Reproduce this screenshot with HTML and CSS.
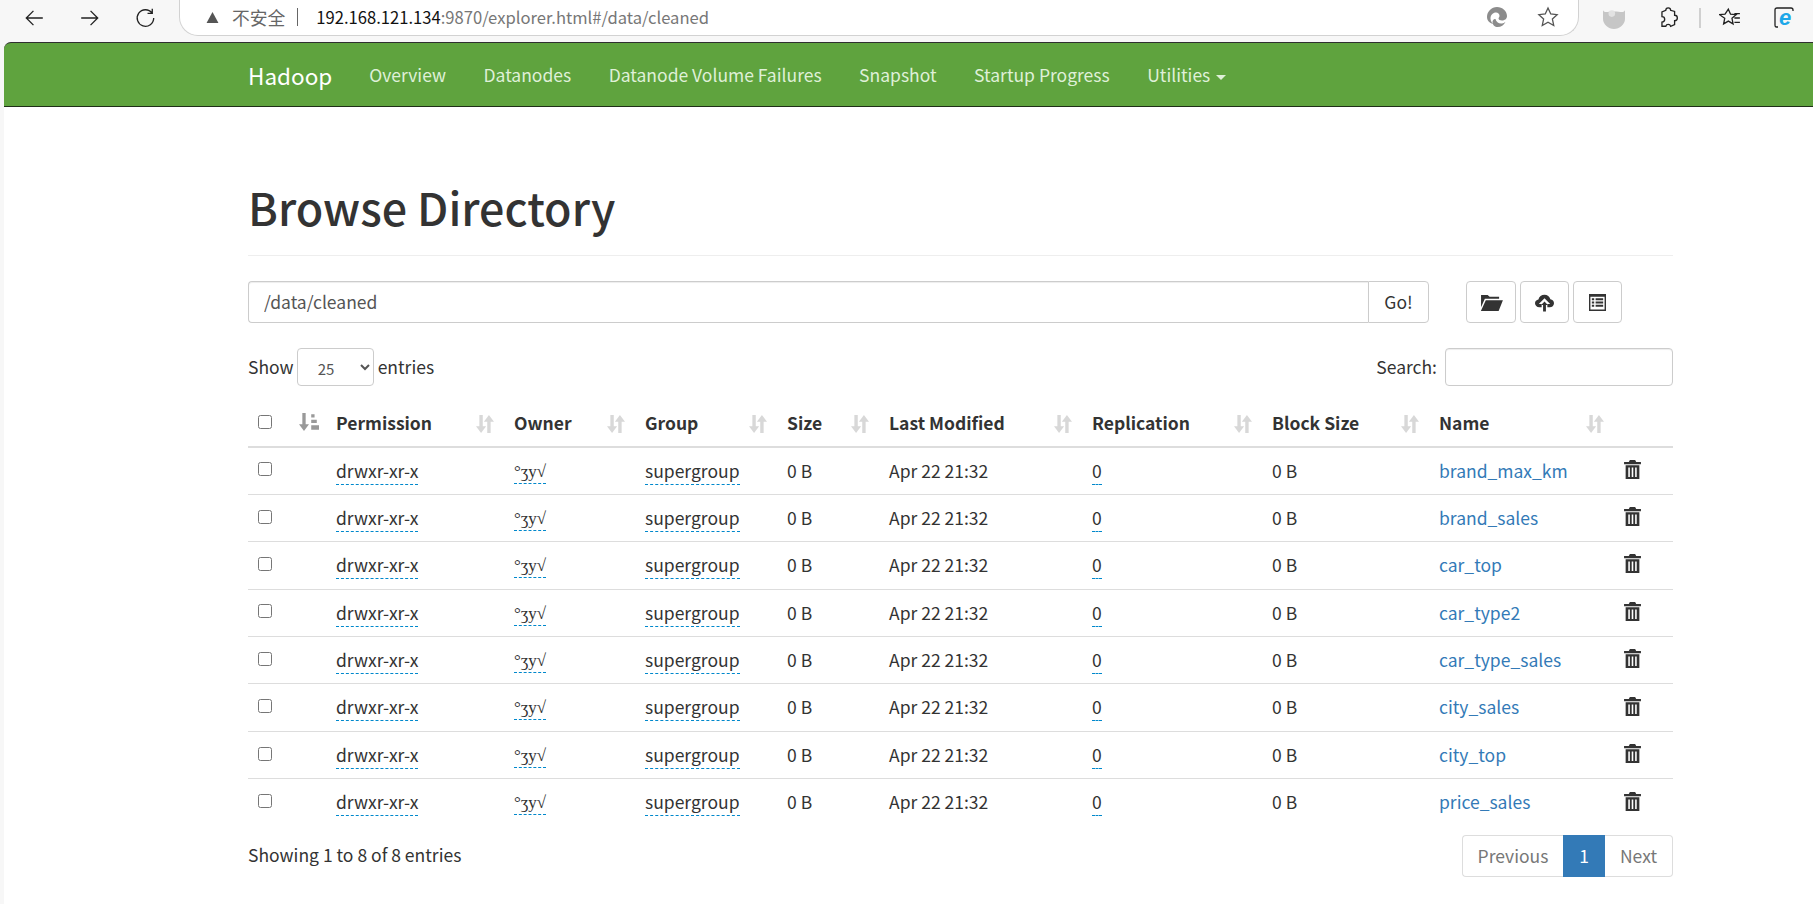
FILE: index.html
```html
<!DOCTYPE html>
<html lang="zh">
<head>
<meta charset="utf-8">
<title>Browsing HDFS</title>
<link rel="stylesheet" href="styles.css">
</head>
<body>
<header class="chrome">
  <div class="nav-btns">
    <svg class="cicon" viewBox="0 0 20 20"><path d="M18 10H3M9.500 3.500 3 10l6.500 6.500"/></svg>
    <svg class="cicon" viewBox="0 0 20 20"><path d="M2 10h15M10.500 3.500 17 10l-6.500 6.500"/></svg>
    <svg class="cicon" viewBox="0 0 20 20"><path d="M15.500 5.500A7.500 7.500 0 1 0 17 10M15.700 1.500v4.300h-4.300"/></svg>
  </div>
  <div class="omnibox">
    <svg class="warn" viewBox="0 0 12 12"><path d="M6 1 11.500 11H.5z"/></svg>
    <span class="insecure">不安全</span>
    <span class="omni-sep"></span>
    <span class="url"><b>192.168.121.134</b>:9870/explorer.html#/data/cleaned</span>
    <span class="omni-end">
      <svg class="edge" viewBox="0 0 20 20"><path d="M10 0c5.500 0 10 4 10 9 0 3-2.500 4.500-5 4.500-2 0-3.500-.8-3.500-2 0-1 1-1.200 1-2.800C12.500 6.800 11 5.500 9 5.500c-3 0-5.500 2.500-5.500 6 0 2 1 3.800 2.500 5.500C2.500 16 0 13.500 0 10 0 4.500 4.500 0 10 0zM8.500 12c.5 3 3.500 5 6.500 4.500 1.300-.2 2.500-.8 3.500-1.800C17 18 14 20 10.500 20c-2.500 0-5-2-5-5 0-2 1.500-3.500 3-3z"/></svg>
      <svg class="cicon star" viewBox="0 0 20 20"><path d="m10 1.800 2.500 5.400 5.800.7-4.300 4 1.200 5.800-5.200-2.900-5.200 2.900 1.200-5.800-4.300-4 5.800-.7z"/></svg>
    </span>
  </div>
  <div class="ext-btns">
    <svg class="fox" viewBox="0 0 20 20"><path d="M0 3c2 3 4 1 10 1s8 2 10-1v8c0 5-5 9-10 9S0 16 0 11z"/><circle class="fox-eye" cx="8" cy="6" r="3"/></svg>
    <svg class="cicon puzzle" viewBox="0 0 20 20"><path d="M8 3a2.200 2.200 0 0 1 4.400 0l3.600 1v3.500a2.400 2.400 0 0 1 0 5V16l-3.600 1.500a2.300 2.300 0 0 0-4.400 0H4.500v-3.800a2.400 2.400 0 0 0 0-5V4.500z"/></svg>
    <span class="ext-sep"></span>
    <svg class="cicon favs" viewBox="0 0 20 20"><path d="M8.500 2l2 4.500 5 .5-3.700 3.300 1 5-4.300-2.500-4.300 2.500 1-5L.5 7l5-.5zM14 6h5M14 10h5M14 14h5"/></svg>
    <span class="ie-wrap"><svg class="ie" viewBox="0 0 22 22"><path class="ie-frame" d="M4 20H2.500Q1 20 1 18V3q0-2 2-2h14q2 0 2 2v1"/></svg><span class="ie-e">e</span></span>
  </div>
</header>

<nav class="navbar">
  <a class="brand">Hadoop</a>
  <a class="nav-link">Overview</a>
  <a class="nav-link">Datanodes</a>
  <a class="nav-link">Datanode Volume Failures</a>
  <a class="nav-link">Snapshot</a>
  <a class="nav-link">Startup Progress</a>
  <a class="nav-link">Utilities <span class="caret"></span></a>
</nav>

<main class="container">
  <h1 class="page-title">Browse Directory</h1>

  <div class="toolbar">
    <div class="path-group">
      <input class="path-input" type="text" value="/data/cleaned">
      <button class="go-btn">Go!</button>
    </div>
    <div class="tool-btns">
      <button class="tool-btn"><svg class="glyph" viewBox="0 0 24 20"><path d="M1 2h7l2 2h10v2H5L1 15zM6 7.500h18L19.500 19H0.800z"/></svg></button>
      <button class="tool-btn"><svg class="glyph" viewBox="0 0 20 20"><path d="M4.500 15C2 15 0 13.200 0 10.800c0-2.200 1.600-3.800 3.600-4C4.300 3.800 6.800 1.800 10 1.800c3 0 5.500 2 6.200 4.800 2.200.2 3.800 1.800 3.800 4.100 0 2.400-2 4.300-4.500 4.300H13V11.500h3L10 5.500l-6 6h3V15z"/><path d="M8.500 19.500v-7H6.500L10 9l3.500 3.500h-2v7z"/></svg></button>
      <button class="tool-btn"><svg class="glyph list" viewBox="0 0 18 18"><path fill-rule="evenodd" d="M0 0h18v18H0zM1.500 3v13.500h15V3zM3 4.500h2.500v2H3zM7 4.500h8v2H7zM3 8h2.500v2H3zM7 8h8v2H7zM3 11.500h2.500v2H3zM7 11.500h8v2H7z"/></svg></button>
    </div>
  </div>

  <div class="filters">
    <label class="length">Show
      <select class="length-select"><option>25</option></select>
      entries</label>
    <label class="search">Search: <input class="search-input" type="text"></label>
  </div>

  <table class="listing">
    <colgroup>
      <col class="c-check"><col class="c-sort"><col class="c-perm"><col class="c-owner"><col class="c-group"><col class="c-size"><col class="c-mod"><col class="c-repl"><col class="c-block"><col class="c-name"><col class="c-del">
    </colgroup>
    <thead>
      <tr>
        <th><input class="check" type="checkbox"></th>
        <th class="th-order"><svg class="sort-on" viewBox="0 0 18 16"><path d="M3 0h3v10h3l-4.500 6L0 10h3zM11 1h3v3h-3zM11 6h5v3h-5zM11 11h7v4h-7z"/></svg></th>
        <th><div class="th-in">Permission<svg class="sort" viewBox="0 0 16 16"><path d="M3 0h3v10h3l-4.500 6L0 10h3zM10 16V6H7l4.500-6L16 6h-3v10z"/></svg></div></th>
        <th><div class="th-in">Owner<svg class="sort" viewBox="0 0 16 16"><path d="M3 0h3v10h3l-4.500 6L0 10h3zM10 16V6H7l4.500-6L16 6h-3v10z"/></svg></div></th>
        <th><div class="th-in">Group<svg class="sort" viewBox="0 0 16 16"><path d="M3 0h3v10h3l-4.500 6L0 10h3zM10 16V6H7l4.500-6L16 6h-3v10z"/></svg></div></th>
        <th><div class="th-in">Size<svg class="sort" viewBox="0 0 16 16"><path d="M3 0h3v10h3l-4.500 6L0 10h3zM10 16V6H7l4.500-6L16 6h-3v10z"/></svg></div></th>
        <th><div class="th-in">Last Modified<svg class="sort" viewBox="0 0 16 16"><path d="M3 0h3v10h3l-4.500 6L0 10h3zM10 16V6H7l4.500-6L16 6h-3v10z"/></svg></div></th>
        <th><div class="th-in">Replication<svg class="sort" viewBox="0 0 16 16"><path d="M3 0h3v10h3l-4.500 6L0 10h3zM10 16V6H7l4.500-6L16 6h-3v10z"/></svg></div></th>
        <th><div class="th-in">Block Size<svg class="sort" viewBox="0 0 16 16"><path d="M3 0h3v10h3l-4.500 6L0 10h3zM10 16V6H7l4.500-6L16 6h-3v10z"/></svg></div></th>
        <th><div class="th-in">Name<svg class="sort" viewBox="0 0 16 16"><path d="M3 0h3v10h3l-4.500 6L0 10h3zM10 16V6H7l4.500-6L16 6h-3v10z"/></svg></div></th>
        <th></th>
      </tr>
    </thead>
    <tbody id="rows"></tbody>
  </table>

  <div class="table-foot">
    <span class="info">Showing 1 to 8 of 8 entries</span>
    <div class="pager">
      <a class="page">Previous</a>
      <a class="page current">1</a>
      <a class="page">Next</a>
    </div>
  </div>
</main>
<script src="rows.js"></script>
</body>
</html>
```
FILE: rows.js
```js
var names = ["brand_max_km", "brand_sales", "car_top", "car_type2", "car_type_sales", "city_sales", "city_top", "price_sales"];
var trash = '<svg class="trash" viewBox="0 0 16 18"><path fill-rule="evenodd" d="M5.500 0h5l1 2H16v2H0V2h4.500zM1.500 5h13v13h-13zM4 7v9h1.500V7zM7.250 7v9h1.500V7zM10.500 7v9H12V7z"/></svg>';
document.getElementById("rows").innerHTML = names.map(function (n) {
  return '<tr>' +
    '<td><input class="check" type="checkbox"></td><td></td>' +
    '<td><a class="edit">drwxr-xr-x</a></td>' +
    '<td><a class="edit"><span class="owner">°ʒy√</span></a></td>' +
    '<td><a class="edit">supergroup</a></td>' +
    '<td>0 B</td><td>Apr 22 21:32</td>' +
    '<td><a class="edit">0</a></td>' +
    '<td>0 B</td>' +
    '<td><a class="file">' + n + '</a></td>' +
    '<td>' + trash + '</td></tr>';
}).join("");
```
FILE: styles.css
```css
* { box-sizing: border-box; }
html, body { margin: 0; height: 100%; }
body {
  background: #f7f7f7;
  color: #333;
  font: 17.500px/22.400px "Noto Sans CJK SC", "Noto Sans", sans-serif;
  overflow: hidden;
}

/* browser chrome */
.chrome {
  height: 42px;
  display: flex;
  align-items: flex-start;
  background: #f7f7f7;
}
.nav-btns {
  display: flex;
  align-items: center;
  gap: 34px;
  height: 36px;
  padding-left: 23px;
  width: 179px;
  flex: none;
}
.cicon { width: 22px; height: 22px; fill: none; stroke: #222; stroke-width: 1.200; flex: none; }
.omnibox {
  width: 1400px;
  height: 37px;
  margin-top: -1px;
  display: flex;
  align-items: center;
  background: #fff;
  border: 1px solid #d2d2d2;
  border-top: 0;
  border-radius: 0 0 19px 19px;
  padding-left: 26px;
  font-size: 16.600px;
  flex: none;
}
.warn { width: 13px; height: 13px; fill: #555; margin-right: 13px; }
.insecure { color: #666; font-size: 17.800px; }
.omni-sep { width: 1px; height: 18px; background: #666; margin: 0 18px 0 12px; }
.url { color: #777; }
.url b { color: #111; font-weight: 400; }
.omni-end { margin-left: auto; display: flex; align-items: center; gap: 30px; padding-right: 19px; }
.edge { width: 20px; height: 20px; fill: #8c8c8c; }
.star { stroke: #555; }
.ext-btns {
  display: flex;
  align-items: center;
  height: 36px;
  padding-left: 24px;
}
.fox { width: 22px; height: 22px; fill: #c6c6c6; margin-right: 32px; }
.fox-eye { fill: #e2e2e2; }
.puzzle { margin-right: 20px; }
.ext-sep { width: 2px; height: 20px; background: #d0d0d0; margin-right: 18px; }
.favs { margin-right: 33px; }
.ie-wrap { position: relative; display: block; width: 22px; height: 22px; }
.ie { display: block; width: 22px; height: 22px; }
.ie-frame { fill: none; stroke: #222; stroke-width: 1.300; }
.ie-e {
  position: absolute;
  left: 5px;
  top: 0;
  font: italic 700 22px/22px "Liberation Sans", sans-serif;
  color: #1ea7e8;
}

/* navbar */
.navbar {
  margin-left: 4px;
  height: 65px;
  display: flex;
  align-items: center;
  padding: 1px 0 0 244px;
  background: #5fa33e;
  border-top: 1px solid #2f2f2f;
  border-bottom: 1px solid #1f2f18;
  border-radius: 7px 0 0 0;
}
.brand { color: #fff; font-size: 22.500px; margin-right: 37px; }
.nav-link { color: #dff0d8; margin-right: 37.500px; }
.caret {
  display: inline-block;
  width: 0;
  height: 0;
  margin-left: 2px;
  vertical-align: middle;
  border-top: 5px solid #dff0d8;
  border-left: 5px solid transparent;
  border-right: 5px solid transparent;
}

/* content */
.container {
  margin-left: 4px;
  height: 798px;
  padding: 0 140px 0 244px;
  background: #fff;
}
.page-title {
  margin: 0;
  padding-top: 69px;
  height: 149px;
  border-bottom: 1px solid #eee;
  font-size: 44.800px;
  line-height: 62px;
  font-weight: 500;
}
.toolbar { display: flex; margin-top: 25px; height: 42px; }
.path-group { display: flex; width: 1181px; }
.path-input {
  flex: 1;
  border: 1px solid #ccc;
  border-right: 0;
  border-radius: 4px 0 0 4px;
  padding: 0 15px;
  font: inherit;
  color: #555;
  box-shadow: inset 0 1px 1px rgba(0, 0, 0, .075);
}
.go-btn {
  width: 61px;
  border: 1px solid #ccc;
  border-radius: 0 4px 4px 0;
  background: #fff;
  font: inherit;
  color: #333;
  padding: 0;
}
.tool-btns { display: flex; gap: 4px; margin-left: 37px; }
.tool-btn {
  width: 50px;
  padding: 0;
  display: flex;
  align-items: center;
  justify-content: center;
  border: 1px solid #ccc;
  border-radius: 4px;
  background: #fff;
}
.tool-btn:nth-child(2), .tool-btn:nth-child(3) { width: 49px; }
.glyph { width: 23px; height: 19px; fill: #333; }
.glyph.list { width: 17px; height: 17px; }
.filters {
  display: flex;
  justify-content: space-between;
  align-items: center;
  margin-top: 25px;
  height: 38px;
}
.length, .search { display: flex; align-items: center; }
.length-select {
  width: 77px;
  height: 38px;
  margin: 0 4px 0 3px;
  padding: 2px 0 0 16px;
  border: 1px solid #ccc;
  border-radius: 4px;
  background: #fff;
  font: 15px "Noto Sans CJK SC", sans-serif;
  color: #555;
}
.search-input {
  width: 228px;
  height: 38px;
  margin-left: 8px;
  border: 1px solid #ccc;
  border-radius: 4px;
  box-shadow: inset 0 1px 1px rgba(0, 0, 0, .075);
}

/* table */
.listing {
  width: 1425px;
  margin-top: 15px;
  table-layout: fixed;
  border-collapse: collapse;
}
.c-check, .c-sort { width: 40px; }
.c-perm { width: 178px; }
.c-owner { width: 131px; }
.c-group { width: 142px; }
.c-size { width: 102px; }
.c-mod { width: 203px; }
.c-repl { width: 180px; }
.c-block { width: 167px; }
.c-name { width: 185px; }
.c-del { width: 57px; }
th {
  height: 46px;
  padding: 0 12px 0 8px;
  text-align: left;
  font-weight: 700;
  border-bottom: 2px solid #ddd;
}
td {
  height: 47.400px;
  padding: 0 8px;
  border-bottom: 1px solid #ddd;
}
tbody tr:last-child td { border-bottom: 0; }
.th-in { display: flex; justify-content: space-between; align-items: center; }
.sort { width: 18px; height: 18px; fill: #d8d8d8; flex: none; }
.sort-on { width: 20px; height: 18px; fill: #999; display: block; margin-left: 3px; }
.th-order { padding: 0 0 4px 8px; }
.check { width: 14px; height: 14px; margin: 0 0 3px 2px; display: block; }
.edit { color: #333; border-bottom: 1px dashed #08c; padding-bottom: 1px; }
.owner { font-family: "Liberation Serif", serif; font-size: 17px; }
.file { color: #337ab7; }
.trash { width: 17px; height: 19px; fill: #333; display: block; margin-bottom: 3px; }

/* footer */
.table-foot {
  display: flex;
  justify-content: space-between;
  margin-top: 9px;
}
.info { padding-top: 9px; }
.pager { display: flex; height: 42px; }
.page {
  display: flex;
  align-items: center;
  justify-content: center;
  border: 1px solid #ddd;
  color: #777;
  background: #fff;
}
.page:nth-child(1) { width: 101px; border-right: 0; border-radius: 4px 0 0 4px; }
.page:nth-child(3) { width: 68px; border-left: 0; border-radius: 0 4px 4px 0; }
.page.current { width: 42px; background: #337ab7; border-color: #337ab7; color: #fff; }
```
